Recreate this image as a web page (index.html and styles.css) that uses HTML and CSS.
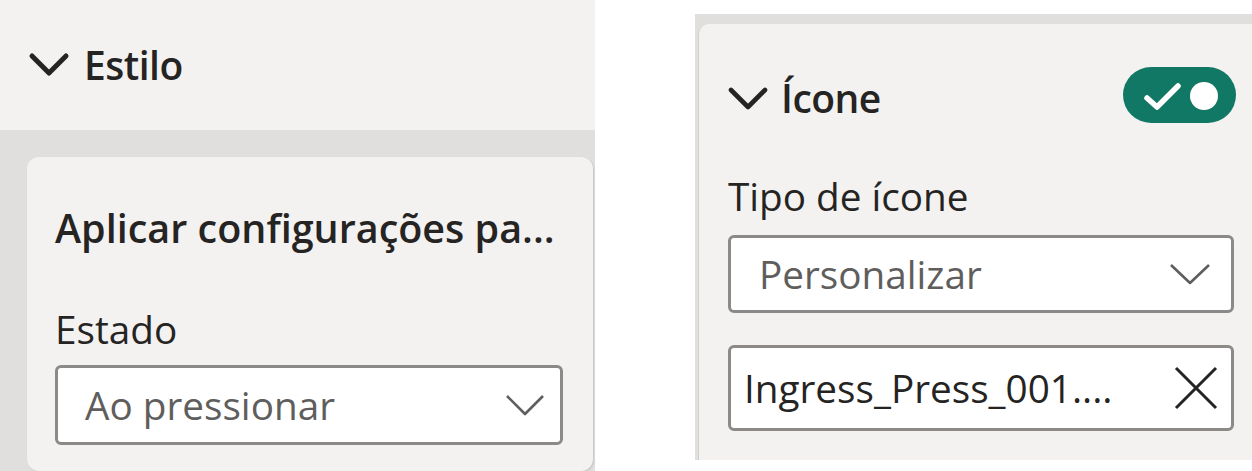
FILE: index.html
```html
<!DOCTYPE html>
<html lang="pt-BR">
<head>
<meta charset="utf-8">
<title>Formatar</title>
<link rel="stylesheet" href="styles.css">
</head>
<body>
<div class="stage">
  <section class="pane pane-left">
    <div class="section-head">
      <svg class="head-chevron" width="42" height="26" viewBox="0 0 42 26"><path d="M4 4 L21 21 L38 4" fill="none" stroke="#252423" stroke-width="5" stroke-linecap="round" stroke-linejoin="round"/></svg>
      <span class="head-title">Estilo</span>
    </div>
    <div class="well">
      <div class="card card-left">
        <div class="group-title">Aplicar configurações pa...</div>
        <div class="field-label label-estado">Estado</div>
        <div class="select select-left">
          <span class="select-text">Ao pressionar</span>
          <svg class="select-chevron" width="40" height="22" viewBox="0 0 40 22"><path d="M2 2 L20 20 L38 2" fill="none" stroke="#605e5c" stroke-width="2.6" stroke-linejoin="round"/></svg>
        </div>
      </div>
    </div>
  </section>

  <section class="pane pane-right">
    <div class="card card-right">
      <div class="card-head">
        <div class="card-head-left">
          <svg class="head-chevron-sm" width="40" height="24" viewBox="0 0 40 24"><path d="M3 3 L20 20 L37 3" fill="none" stroke="#252423" stroke-width="4.6" stroke-linecap="round" stroke-linejoin="round"/></svg>
          <span class="head-title">Ícone</span>
        </div>
        <svg class="toggle" width="113" height="56" viewBox="0 0 113 56">
          <rect x="0" y="0" width="113" height="56" rx="28" fill="#117865"/>
          <path d="M24 31 L34 40 L55 19" fill="none" stroke="#ffffff" stroke-width="5.5" stroke-linecap="round" stroke-linejoin="round"/>
          <circle cx="81" cy="29" r="14" fill="#ffffff"/>
        </svg>
      </div>
      <div class="field-label label-tipo">Tipo de ícone</div>
      <div class="select select-right">
        <span class="select-text">Personalizar</span>
        <svg class="select-chevron" width="42" height="24" viewBox="0 0 42 24"><path d="M2 3 L21 21 L40 3" fill="none" stroke="#605e5c" stroke-width="2.6" stroke-linejoin="round"/></svg>
      </div>
      <div class="file-input">
        <span class="file-name">Ingress_Press_001....</span>
        <svg class="clear-icon" width="46" height="44" viewBox="0 0 46 44"><path d="M3 2 L43 42 M43 2 L3 42" fill="none" stroke="#252423" stroke-width="3"/></svg>
      </div>
    </div>
  </section>
</div>
</body>
</html>
```
FILE: styles.css
```css
* { box-sizing: border-box; }

html, body {
  margin: 0;
  padding: 0;
  background: #ffffff;
}

body {
  font-family: "Open Sans", "Noto Sans", "Liberation Sans", sans-serif;
  color: #252423;
  width: 1252px;
  height: 471px;
  overflow: hidden;
}

.stage {
  display: flex;
  align-items: flex-start;
  width: 1252px;
  height: 471px;
}

/* ---------- left pane ---------- */
.pane-left {
  width: 595px;
  height: 471px;
  background: #f3f2f1;
  display: flex;
  flex-direction: column;
}

.section-head {
  height: 130px;
  display: flex;
  align-items: center;
  padding-left: 28px;
  gap: 14px;
}

.head-title {
  font-size: 39px;
  font-weight: 600;
  line-height: 48px;
  letter-spacing: -0.5px;
  color: #252423;
}

.well {
  flex: 1;
  background: #e1dfdd;
  padding: 27px 2px 0 27px;
  display: flex;
}

.card {
  background: #f3f2f1;
  display: flex;
  flex-direction: column;
}

.card-left {
  flex: 1;
  border-radius: 12px;
  padding: 47px 30px 0 28px;
  box-shadow: 1px 1px 2px rgba(0, 0, 0, 0.12);
}

.group-title {
  font-size: 39.5px;
  font-weight: 600;
  line-height: 48px;
  white-space: nowrap;
}

.field-label {
  font-size: 38.7px;
  font-weight: 400;
  line-height: 48px;
  white-space: nowrap;
}

.label-estado { margin-top: 53px; }

.select, .file-input {
  background: #ffffff;
  border: 3px solid #8c8a88;
  border-radius: 6px;
  display: flex;
  align-items: center;
  justify-content: space-between;
}

.select-left {
  margin-top: 12px;
  height: 80px;
  padding: 0 15px 0 27px;
}

.select-text {
  font-size: 38.7px;
  line-height: 48px;
  color: #605e5c;
  white-space: nowrap;
}

/* ---------- right pane ---------- */
.pane-right {
  margin-left: 100px;
  margin-top: 14px;
  width: 557px;
  height: 446px;
  background: #e1dfdd;
  padding: 10px 0 0 3px;
  display: flex;
}

.card-right {
  flex: 1;
  border-top-left-radius: 10px;
  padding: 43px 18px 0 29px;
  border-left: 1px solid #d2d0ce;
}

.card-head {
  height: 56px;
  display: flex;
  align-items: center;
  justify-content: space-between;
}

.card-head-left {
  display: flex;
  align-items: center;
  gap: 13px;
  margin-top: 6px;
}

.head-chevron-sm { margin-top: 2px; }

.toggle { margin-right: -2px; }

.label-tipo { margin-top: 49px; }

.select-right {
  margin-top: 15px;
  height: 78px;
  padding: 0 20px 0 28px;
}

.file-input {
  margin-top: 32px;
  height: 86px;
  padding: 0 12px 0 13px;
}

.file-name {
  font-size: 38.7px;
  line-height: 48px;
  color: #252423;
  white-space: nowrap;
}
```
